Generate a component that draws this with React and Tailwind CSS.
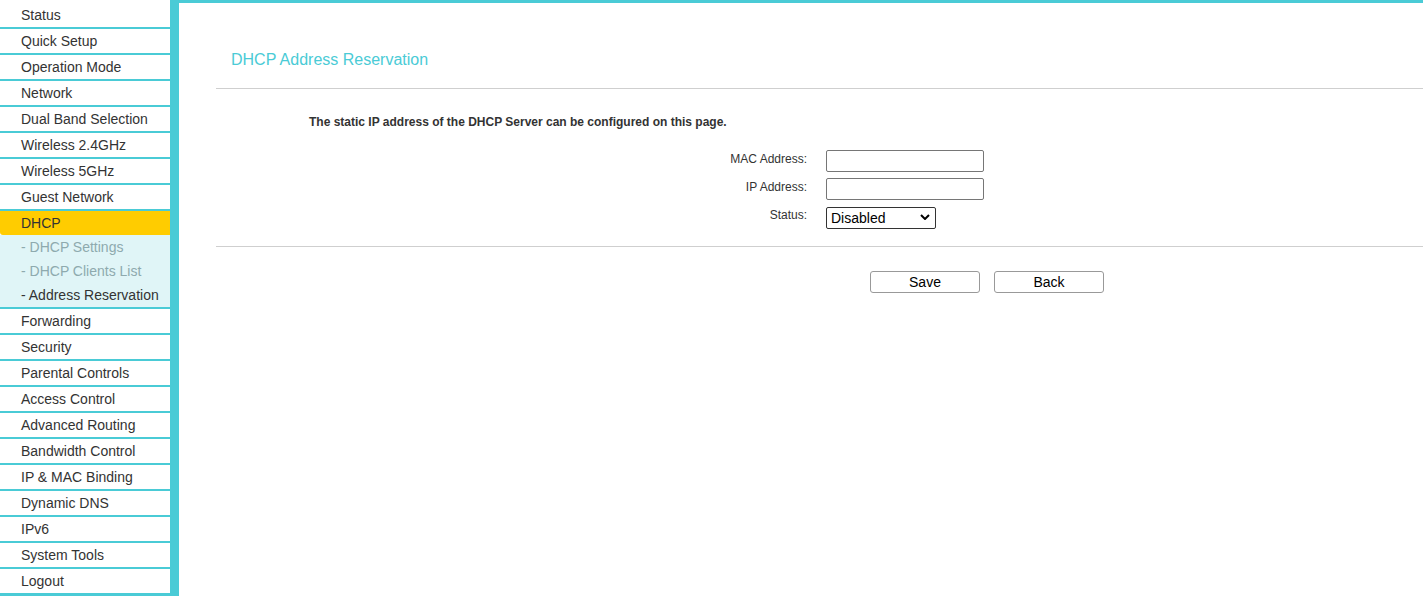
import { useState } from "react";

const menuTop = [
  "Status",
  "Quick Setup",
  "Operation Mode",
  "Network",
  "Dual Band Selection",
  "Wireless 2.4GHz",
  "Wireless 5GHz",
  "Guest Network",
];

const dhcpSub = [
  { label: "- DHCP Settings", active: false },
  { label: "- DHCP Clients List", active: false },
  { label: "- Address Reservation", active: true },
];

const menuBottom = [
  "Forwarding",
  "Security",
  "Parental Controls",
  "Access Control",
  "Advanced Routing",
  "Bandwidth Control",
  "IP & MAC Binding",
  "Dynamic DNS",
  "IPv6",
  "System Tools",
  "Logout",
];

function MenuItem({ label }) {
  return (
    <li className="h-[26px] border-b-2 border-[#4acbd6] bg-white pl-[21px] text-[14px] leading-[24px] text-[#333]">
      {label}
    </li>
  );
}

function Sidebar() {
  return (
    <aside className="w-[179px] shrink-0 bg-[#4acbd6] pr-[9px]">
      <ul className="w-[170px] bg-white pt-[3px]">
        {menuTop.map((m) => (
          <MenuItem key={m} label={m} />
        ))}
        <li className="border-b-2 border-[#4acbd6]">
          <div className="h-[24px] rounded-bl-[3px] bg-[#ffcc00] pl-[21px] text-[14px] leading-[24px] text-[#333]">
            DHCP
          </div>
          <ul className="bg-[#e0f5f7]">
            {dhcpSub.map((s) => (
              <li
                key={s.label}
                className={`h-[24px] pl-[21px] text-[14px] leading-[24px] ${
                  s.active ? "text-[#333]" : "text-[#8eaaae]"
                }`}
              >
                {s.label}
              </li>
            ))}
          </ul>
        </li>
        {menuBottom.map((m) => (
          <MenuItem key={m} label={m} />
        ))}
      </ul>
    </aside>
  );
}

function Field({ label, children }) {
  return (
    <div className="flex items-start gap-[19px]">
      <label className="w-[591px] pt-[1px] text-right text-[12px] leading-4 text-[#333]">
        {label}
      </label>
      {children}
    </div>
  );
}

export default function App() {
  const [mac, setMac] = useState("");
  const [ip, setIp] = useState("");
  const [status, setStatus] = useState("Disabled");

  return (
    <div
      className="flex h-[596px] w-full overflow-hidden bg-white"
      style={{ fontFamily: '"Liberation Sans", Arial, sans-serif' }}
    >
      <Sidebar />

      <main className="flex-1 border-t-[3px] border-[#4acbd6]">
        <div className="ml-[37px]">
          <h1 className="mt-[47px] pl-[15px] text-[16px] leading-5 font-normal text-[#4acbd6]">
            DHCP Address Reservation
          </h1>
          <div className="mt-[18px] border-t border-[#cfcfcf]" />

          <p className="mt-[25px] pl-[93px] text-[12px] leading-4 font-bold text-[#333]">
            The static IP address of the DHCP Server can be configured on this page.
          </p>

          <div className="mt-[20px] flex flex-col gap-[6px]">
            <Field label="MAC Address:">
              <input
                value={mac}
                onChange={(e) => setMac(e.target.value)}
                className="h-[22px] w-[158px] rounded-[2px] border border-[#767676] px-1 text-[13px]"
              />
            </Field>
            <Field label="IP Address:">
              <input
                value={ip}
                onChange={(e) => setIp(e.target.value)}
                className="h-[22px] w-[158px] rounded-[2px] border border-[#767676] px-1 text-[13px]"
              />
            </Field>
            <Field label="Status:">
              <div className="relative h-[22px] w-[110px]">
                <select
                  value={status}
                  onChange={(e) => setStatus(e.target.value)}
                  className="h-full w-full appearance-none rounded-[2px] border border-[#333] bg-white pl-[4px] text-[14px] leading-4 text-black"
                >
                  <option>Disabled</option>
                  <option>Enabled</option>
                </select>
                <svg
                  viewBox="0 0 10 6"
                  className="pointer-events-none absolute top-[8px] right-[6px] h-[6px] w-[10px]"
                >
                  <path d="M1 1l4 4 4-4" fill="none" stroke="#000" strokeWidth="2" />
                </svg>
              </div>
            </Field>
          </div>

          <div className="mt-[18px] border-t border-[#cfcfcf]" />

          <div className="mt-[24px] flex gap-[14px] pl-[654px]">
            <button className="h-[22px] w-[110px] rounded-[3px] border border-[#999] bg-white text-[14px] text-black">
              Save
            </button>
            <button className="h-[22px] w-[110px] rounded-[3px] border border-[#999] bg-white text-[14px] text-black">
              Back
            </button>
          </div>
        </div>
      </main>
    </div>
  );
}
